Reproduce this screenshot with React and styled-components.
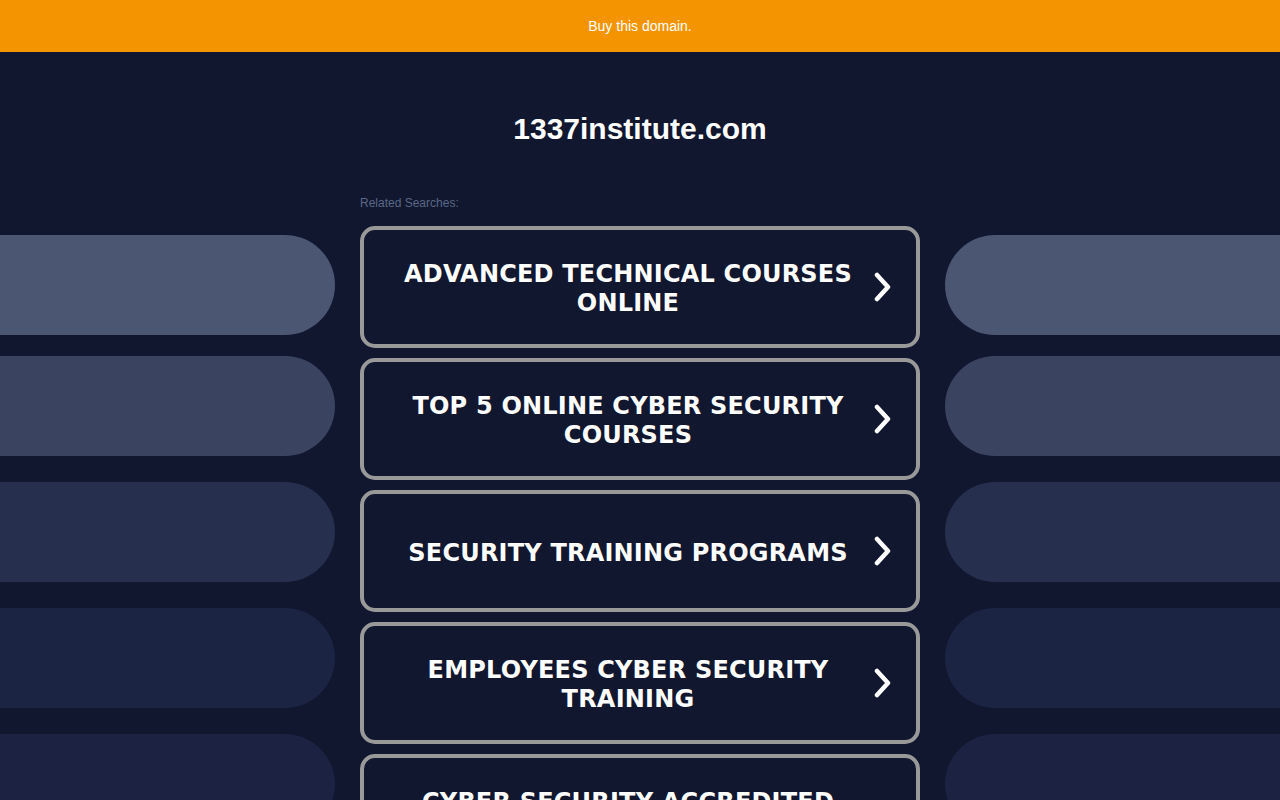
import React from "react";
import styled, { createGlobalStyle } from "styled-components";

const Global = createGlobalStyle`
  html, body { margin: 0; padding: 0; background: #11172f; }
  body { font-family: "Liberation Sans", Arial, sans-serif; overflow-x: hidden; }
  * { box-sizing: border-box; }
`;

const Banner = styled.a`
  display: flex;
  align-items: center;
  justify-content: center;
  height: 52px;
  background: #f39400;
  color: #ffffff;
  font-size: 14px;
  text-decoration: none;
`;

const Main = styled.div`
  display: grid;
  grid-template-columns: 1fr 560px 1fr;
  column-gap: 25px;
`;

const Side = styled.div`
  display: flex;
  flex-direction: column;
  gap: 26px;
  padding-top: 183px;
`;

const Pill = styled.div`
  height: 100px;
  background: ${(p) => p.$color};
  border-radius: ${(p) => (p.$side === "left" ? "0 50px 50px 0" : "50px 0 0 50px")};
  margin-bottom: ${(p) => (p.$first ? "-5px" : "0")};
`;

const Center = styled.div`
  display: flex;
  flex-direction: column;
`;

const Title = styled.h1`
  margin: 59px 0 0;
  text-align: center;
  font-family: "Liberation Sans", Arial, sans-serif;
  font-weight: 700;
  font-size: 30px;
  line-height: 36px;
  color: #ffffff;
`;

const Related = styled.div`
  margin-top: 49px;
  font-size: 12px;
  line-height: 14px;
  color: #5b6787;
`;

const List = styled.div`
  display: flex;
  flex-direction: column;
  gap: 10px;
  margin-top: 16px;
`;

const Card = styled.a`
  display: flex;
  align-items: center;
  min-height: 122px;
  padding: 4px 20px 0;
  border: 4px solid #999999;
  border-radius: 15px;
  background: #11172f;
  color: #ffffff;
  text-decoration: none;
`;

const CardText = styled.span`
  flex: 1;
  text-align: center;
  font-family: "DejaVu Sans", Verdana, sans-serif;
  font-weight: 700;
  font-size: 24px;
  line-height: 29px;
  letter-spacing: 0.2px;
  text-transform: uppercase;
`;

const Chevron = styled.svg`
  flex: 0 0 24px;
  width: 24px;
  height: 30px;
  margin-top: -4px;
`;

const left = ["#4b5673", "#3a4360", "#262f4e", "#1c2444", "#1b2242"];
const items = [
  "Advanced Technical Courses Online",
  "Top 5 Online Cyber Security Courses",
  "Security Training Programs",
  "Employees Cyber Security Training",
  "Cyber Security Accredited Courses",
];

export default function App() {
  return (
    <>
      <Global />
      <Banner href="#">Buy this domain.</Banner>
      <Main>
        <Side>
          {left.map((c, i) => (
            <Pill key={i} $color={c} $side="left" $first={i === 0} />
          ))}
        </Side>
        <Center>
          <Title>1337institute.com</Title>
          <Related>Related Searches:</Related>
          <List>
            {items.map((t) => (
              <Card href="#" key={t}>
                <CardText>{t}</CardText>
                <Chevron viewBox="0 0 24 30">
                  <polyline
                    points="5,3 16,15 5,27"
                    fill="none"
                    stroke="#ffffff"
                    strokeWidth="4.5"
                    strokeLinecap="round"
                    strokeLinejoin="round"
                  />
                </Chevron>
              </Card>
            ))}
          </List>
        </Center>
        <Side>
          {left.map((c, i) => (
            <Pill key={i} $color={c} $side="right" $first={i === 0} />
          ))}
        </Side>
      </Main>
    </>
  );
}
